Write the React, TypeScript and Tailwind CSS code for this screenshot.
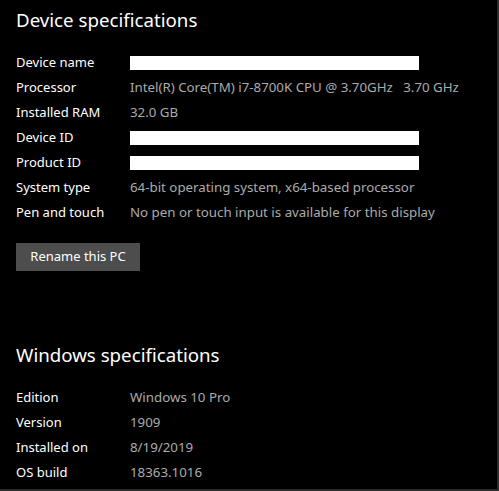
const device: [string, string | null][] = [
  ["Device name", null],
  ["Processor", "Intel(R) Core(TM) i7-8700K CPU @ 3.70GHz\u00a0\u00a0\u00a03.70 GHz"],
  ["Installed RAM", "32.0 GB"],
  ["Device ID", null],
  ["Product ID", null],
  ["System type", "64-bit operating system, x64-based processor"],
  ["Pen and touch", "No pen or touch input is available for this display"],
];

const windows: [string, string][] = [
  ["Edition", "Windows 10 Pro"],
  ["Version", "1909"],
  ["Installed on", "8/19/2019"],
  ["OS build", "18363.1016"],
];

function Row({ label, value }: { label: string; value: string | null }) {
  return (
    <div className="flex items-center h-[25px]">
      <div className="w-[114px] shrink-0 text-white">{label}</div>
      {value === null ? (
        <div className="w-[289px] h-[14px] bg-white" />
      ) : (
        <div className="text-[#ababab] text-[13.3px] whitespace-nowrap">{value}</div>
      )}
    </div>
  );
}

export default function App() {
  return (
    <div
      className="w-[499px] h-[491px] bg-black border-r-2 border-b-2 border-[#2b2b2b] overflow-hidden text-[13px]"
      style={{ fontFamily: '"Noto Sans", "Open Sans", sans-serif' }}
    >
      <div className="pl-4 pt-[6px]">
        <h1 className="text-[18.7px] leading-[28px] text-white">Device specifications</h1>
        <div className="mt-4">
          {device.map(([l, v]) => (
            <Row key={l} label={l} value={v} />
          ))}
        </div>
        <button className="mt-[18px] h-[28px] w-[124px] bg-[#4d4d4d] text-white text-[13px]">
          Rename this PC
        </button>
        <h1 className="mt-[70px] text-[18.7px] leading-[28px] text-white">Windows specifications</h1>
        <div className="mt-4">
          {windows.map(([l, v]) => (
            <Row key={l} label={l} value={v} />
          ))}
        </div>
      </div>
    </div>
  );
}
